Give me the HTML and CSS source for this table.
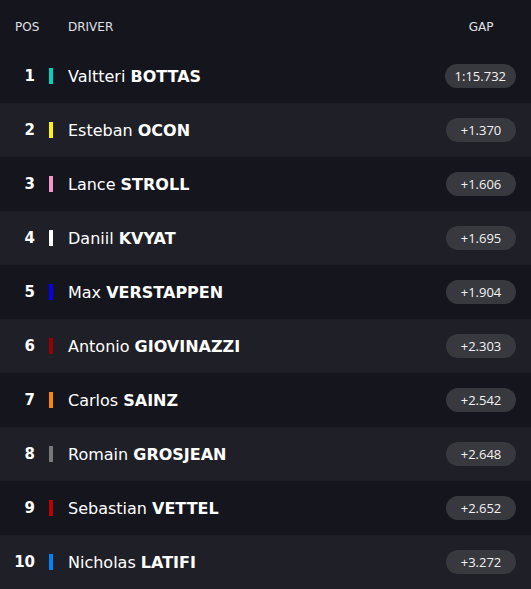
FILE: index.html
```html
<!DOCTYPE html>
<html lang="en">
<head>
    <meta charset="UTF-8">
    <title>Timing</title>
    <link rel="stylesheet" href="styles.css">
</head>
<body>
    <div class="board">
        <div class="head">
            <span class="pos">POS</span>
            <span class="driver">DRIVER</span>
            <span class="gap">GAP</span>
        </div>
        <div class="row"><span class="pos">1</span><span class="bar" style="background:#00d2be"></span><span class="name">Valtteri <b>BOTTAS</b></span><span class="gap"><span class="badge">1:15.732</span></span></div>
        <div class="row"><span class="pos">2</span><span class="bar" style="background:#fff500"></span><span class="name">Esteban <b>OCON</b></span><span class="gap"><span class="badge">+1.370</span></span></div>
        <div class="row"><span class="pos">3</span><span class="bar" style="background:#f596c8"></span><span class="name">Lance <b>STROLL</b></span><span class="gap"><span class="badge">+1.606</span></span></div>
        <div class="row"><span class="pos">4</span><span class="bar" style="background:#ffffff"></span><span class="name">Daniil <b>KVYAT</b></span><span class="gap"><span class="badge">+1.695</span></span></div>
        <div class="row"><span class="pos">5</span><span class="bar" style="background:#0600ef"></span><span class="name">Max <b>VERSTAPPEN</b></span><span class="gap"><span class="badge">+1.904</span></span></div>
        <div class="row"><span class="pos">6</span><span class="bar" style="background:#9b0000"></span><span class="name">Antonio <b>GIOVINAZZI</b></span><span class="gap"><span class="badge">+2.303</span></span></div>
        <div class="row"><span class="pos">7</span><span class="bar" style="background:#ff8700"></span><span class="name">Carlos <b>SAINZ</b></span><span class="gap"><span class="badge">+2.542</span></span></div>
        <div class="row"><span class="pos">8</span><span class="bar" style="background:#787878"></span><span class="name">Romain <b>GROSJEAN</b></span><span class="gap"><span class="badge">+2.648</span></span></div>
        <div class="row"><span class="pos">9</span><span class="bar" style="background:#c00000"></span><span class="name">Sebastian <b>VETTEL</b></span><span class="gap"><span class="badge">+2.652</span></span></div>
        <div class="row"><span class="pos">10</span><span class="bar" style="background:#0082fa"></span><span class="name">Nicholas <b>LATIFI</b></span><span class="gap"><span class="badge">+3.272</span></span></div>
    </div>
</body>
</html>
```
FILE: styles.css
```css
body {
    margin: 0;
    padding: 0;
    background-color: #15151e;
    font-family: "DejaVu Sans", "Liberation Sans", sans-serif;
    color: #ffffff;
}
.board {
    width: 531px;
}
.head {
    display: flex;
    align-items: center;
    height: 49px;
    padding-top: 4px;
    box-sizing: border-box;
    font-size: 12px;
    color: #e0e0e4;
}
.head .pos {
    width: 40px;
    padding-left: 15px;
    box-sizing: border-box;
}
.head .driver {
    margin-left: 28px;
    flex: 1;
}
.head .gap {
    width: 70px;
    margin-right: 15px;
    text-align: center;
}
.row {
    display: flex;
    align-items: center;
    height: 54px;
}
.row:nth-child(odd) {
    background-color: #1f1f27;
}
.row .pos {
    width: 35px;
    text-align: right;
    font-weight: bold;
    font-size: 15px;
}
.bar {
    width: 4px;
    height: 16px;
    margin-left: 14px;
}
.name {
    margin-left: 15px;
    flex: 1;
    font-size: 16px;
}
.name b {
    font-weight: bold;
}
.row .gap {
    margin-right: 15px;
    display: flex;
    justify-content: flex-end;
}
.badge {
    background-color: #38383f;
    border-radius: 12px;
    height: 24px;
    line-height: 24px;
    min-width: 70px;
    padding: 0 10px;
    box-sizing: border-box;
    text-align: center;
    font-family: "Open Sans", "Liberation Sans", sans-serif;
    font-size: 13px;
    color: #f2f2f2;
}
```
